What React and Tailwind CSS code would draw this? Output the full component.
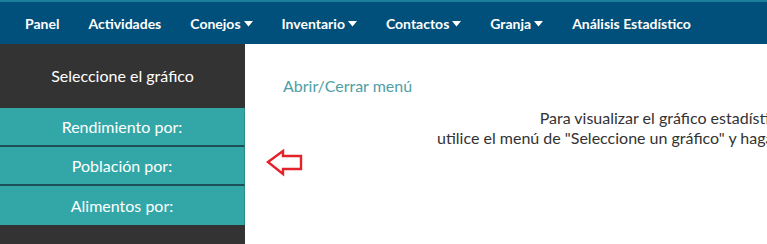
import React from 'react';

const navItems = [
    { label: 'Panel' },
    { label: 'Actividades' },
    { label: 'Conejos', caret: true },
    { label: 'Inventario', caret: true },
    { label: 'Contactos', caret: true },
    { label: 'Granja', caret: true },
    { label: 'Análisis Estadístico' },
];

const chartGroups = ['Rendimiento por:', 'Población por:', 'Alimentos por:'];

const Caret = () => (
    <svg width="9" height="6" viewBox="0 0 9 6" className="ml-[3px] mt-[2px]">
        <path d="M0 0 L9 0 L4.5 5.5 Z" fill="currentColor" />
    </svg>
);

const App = () => {
    return (
        <div className="w-[767px] h-[244px] overflow-hidden bg-white font-['Lato','Liberation_Sans',sans-serif]">
            {/* Top navigation */}
            <nav className="h-[44px] bg-[#00507b] border-t-2 border-[#1b7e9c] flex items-center gap-[1px] pl-[11px]">
                {navItems.map((item) => (
                    <a
                        key={item.label}
                        className="flex items-center px-[14px] text-[14px] font-bold text-white whitespace-nowrap"
                    >
                        {item.label}
                        {item.caret && <Caret />}
                    </a>
                ))}
            </nav>

            <div className="flex h-[200px]">
                {/* Sidebar */}
                <aside className="w-[245px] shrink-0 bg-[#333333] flex flex-col">
                    <div className="h-[64px] flex items-center justify-center text-[16px] text-white">
                        Seleccione el gráfico
                    </div>
                    {chartGroups.map((group, i) => (
                        <button
                            key={group}
                            className={`h-[39px] w-full bg-[#33a7a7] border-r border-[#2a8e8e] text-[16px] text-white ${i < chartGroups.length - 1 ? 'border-b-2 border-b-[#1d4f58]' : ''}`}
                        >
                            {group}
                        </button>
                    ))}
                </aside>

                {/* Main content */}
                <main className="flex-1 pl-[38px] pt-[30px]">
                    <a className="text-[16px] text-[#4d9ea5]">Abrir/Cerrar menú</a>
                    <div className="flex items-start mt-[10px]">
                        <svg width="38" height="28" viewBox="0 0 38 28" className="mt-[41px] -ml-[17px] shrink-0">
                            <path
                                d="M2 13 L17 2 L17 7 L35 7 L35 20 L17 20 L17 25 Z"
                                fill="none"
                                stroke="#e2232a"
                                strokeWidth="2.4"
                                strokeLinejoin="miter"
                            />
                        </svg>
                        <p className="ml-[92px] w-[600px] shrink-0 text-center text-[16px] leading-[20px] text-[#333333] whitespace-nowrap">
                            Para visualizar el gráfico estadístico deseado,
                            <br />
                            utilice el menú de "Seleccione un gráfico" y haga clic en la opción deseada.
                        </p>
                    </div>
                </main>
            </div>
        </div>
    );
};

export default App;
